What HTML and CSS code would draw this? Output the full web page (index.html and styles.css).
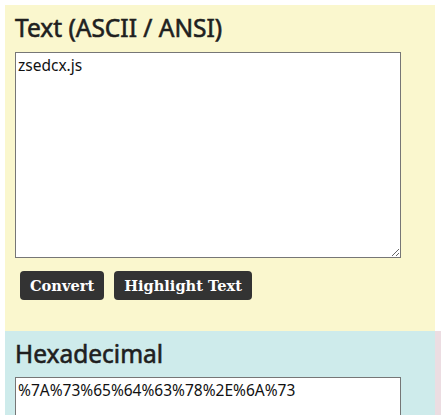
FILE: index.html
```html
<!DOCTYPE html>
<html>
<head>
<meta charset="utf-8">
<link rel="stylesheet" href="styles.css">
</head>
<body>
<div class="page">
  <section class="panel panel-text">
    <h2 class="panel-title">Text (ASCII / ANSI)</h2>
    <textarea class="field field-text">zsedcx.js</textarea>
    <div class="actions">
      <button class="btn">Convert</button>
      <button class="btn">Highlight Text</button>
    </div>
  </section>
  <div class="row">
    <section class="panel panel-hex">
      <h2 class="panel-title panel-title-tight">Hexadecimal</h2>
      <textarea class="field field-hex">%7A%73%65%64%63%78%2E%6A%73</textarea>
    </section>
    <section class="panel panel-side"></section>
  </div>
</div>
</body>
</html>
```

FILE: styles.css
```css
html, body {
  margin: 0;
  padding: 0;
  background: #ffffff;
  overflow: hidden;
}
.page {
  padding: 5px 0 0 5px;
  font-family: "Noto Sans", "Open Sans", sans-serif;
  color: #222;
}
.panel {
  box-sizing: border-box;
  width: 430px;
  padding: 10px;
}
.panel-text {
  background: #faf7ce;
  padding-bottom: 31px;
}
.row {
  display: flex;
}
.panel-hex {
  background: #ceebeb;
  flex: none;
  height: 200px;
}
.panel-side {
  background: #ecdde2;
  flex: 1;
  width: auto;
}
.panel-title {
  margin: 0 0 11px;
  font-size: 24.5px;
  line-height: 26px;
  font-weight: 400;
  -webkit-text-stroke: 0.6px #1f1f1f;
  color: #1f1f1f;
}
.panel-title-tight {
  margin-bottom: 10px;
}
.field {
  display: block;
  box-sizing: border-box;
  width: 386px;
  margin: 0;
  padding: 2px;
  border: 1px solid #767676;
  background: #fff;
  font-family: "Noto Sans", "Open Sans", sans-serif;
  font-size: 15.5px;
  line-height: 21px;
  color: #111;
}
.field-text {
  height: 206px;
}
.field-hex {
  height: 120px;
}
.actions {
  display: flex;
  gap: 10px;
  margin: 13px 0 0 5px;
}
.btn {
  height: 29px;
  padding: 0 10px;
  border: 0;
  border-radius: 4px;
  background: #333333;
  color: #ffffff;
  font-family: "DejaVu Serif", Georgia, serif;
  font-weight: bold;
  font-size: 14.6px;
  line-height: 29px;
}
```
